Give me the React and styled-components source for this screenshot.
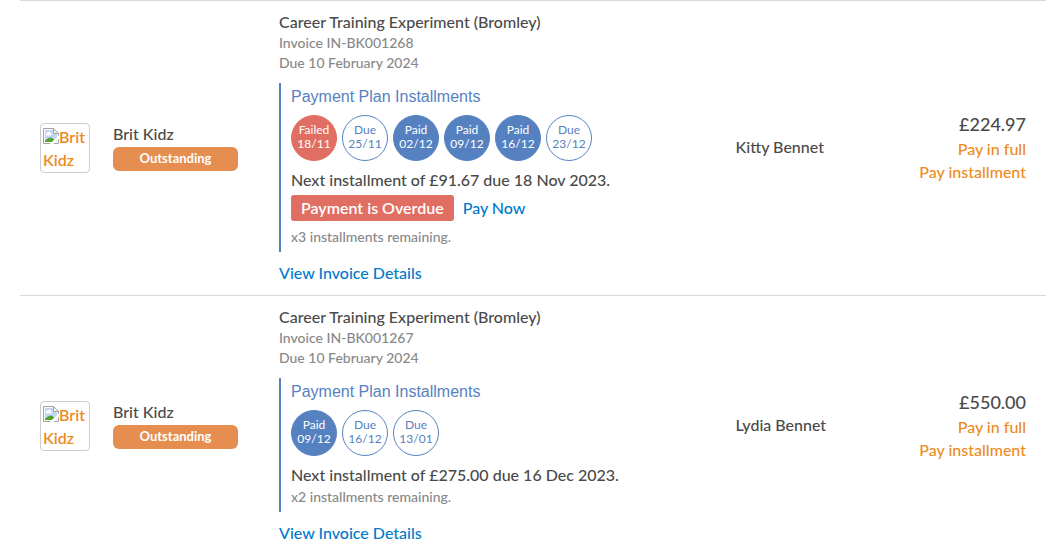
import React from 'react'
import styled, { createGlobalStyle } from 'styled-components'

const GlobalStyle = createGlobalStyle`
  * {
    box-sizing: border-box;
  }

  body {
    margin: 0;
    background: #fff;
    color: #4a4a4a;
    font-family: Lato, sans-serif;
    font-size: 16px;
    font-weight: 500;
    line-height: 23px;
  }
`

const Page = styled.main`
  padding: 0 18px 0 20px;
`

const Table = styled.table`
  width: 100%;
  table-layout: fixed;
  border-collapse: separate;
  border-spacing: 0;
`

const Col = styled.col`
  width: ${props => props.$width};
`

const Cell = styled.td`
  border-top: 1px solid #d8d8d8;
  padding: 10px 0;
  vertical-align: middle;
`

const LogoCell = styled(Cell)`
  padding-left: 20px;
`

const PersonCell = styled(Cell)`
  padding-bottom: 13px;
`

const AmountCell = styled(Cell)`
  padding-right: 20px;
  padding-bottom: 12px;
  text-align: right;
`

const Link = styled.a`
  color: #007acc;
  text-decoration: none;
`

const LogoLink = styled.a`
  display: block;
  width: 50px;
  height: 50px;
  padding: 1px 2px;
  border: 1px solid #ccc;
  border-radius: 4px;
  overflow: hidden;
  color: #ed8b1c;
  font-weight: 600;
  text-decoration: none;

  svg {
    vertical-align: -1px;
  }
`

const Status = styled.div`
  width: 125px;
  height: 24px;
  margin: 2px 0 3px;
  border-radius: 6px;
  background: #e68d50;
  color: #fff;
  font-size: 13px;
  font-weight: 700;
  line-height: 22px;
  text-align: center;
`

const Title = styled.div`
  line-height: 22px;
`

const Note = styled.div`
  color: #888;
  font-size: 14px;
  line-height: 20px;
`

const Plan = styled.section`
  margin: 10px 0 9px;
  padding: 2px 0 5px 10px;
  border-left: 2px solid #5681c1;
`

const PlanTitle = styled.h2`
  margin: 0 0 7px;
  color: #5681c1;
  font-family: 'Liberation Sans', sans-serif;
  font-size: 16px;
  font-weight: 400;
  line-height: 23px;
`

const Installments = styled.div`
  display: flex;
  gap: 5px;
  margin-bottom: 7px;
`

const fills = {
  Failed: '#e16e63',
  Paid: '#5681c1',
  Due: '#fff',
}

const Installment = styled.div`
  display: flex;
  flex-direction: column;
  justify-content: center;
  width: 46px;
  height: 46px;
  padding-bottom: 2px;
  border: 1px solid ${props => (props.$status === 'Failed' ? '#e16e63' : '#5681c1')};
  border-radius: 50%;
  background: ${props => fills[props.$status]};
  color: ${props => (props.$status === 'Due' ? '#5681c1' : '#fff')};
  font-size: 12px;
  font-weight: 400;
  line-height: 14px;
  text-align: center;
`

const NextDue = styled.div`
  padding-bottom: 1px;
`

const OverdueRow = styled.div`
  display: flex;
  align-items: center;
  gap: 9px;
  margin: 3px 0 6px;

  ${Link} {
    padding-bottom: 2px;
  }
`

const Overdue = styled.span`
  padding: 0 10px;
  border-radius: 3px;
  background: #e16e63;
  color: #fff;
  font-weight: 600;
  line-height: 26px;
`

const DetailsLink = styled(Link)`
  display: block;
  padding-bottom: 1px;
`

const Amount = styled.div`
  font-size: 18px;
  line-height: 26px;
`

const PayLink = styled.a`
  display: block;
  color: #ed8b1c;
  text-decoration: none;
`

const invoices = [
  {
    number: 'IN-BK001268',
    installments: [
      ['Failed', '18/11'],
      ['Due', '25/11'],
      ['Paid', '02/12'],
      ['Paid', '09/12'],
      ['Paid', '16/12'],
      ['Due', '23/12'],
    ],
    next: 'Next installment of £91.67 due 18 Nov 2023.',
    overdue: true,
    remaining: 3,
    person: 'Kitty Bennet',
    amount: '£224.97',
  },
  {
    number: 'IN-BK001267',
    installments: [
      ['Paid', '09/12'],
      ['Due', '16/12'],
      ['Due', '13/01'],
    ],
    next: 'Next installment of £275.00 due 16 Dec 2023.',
    overdue: false,
    remaining: 2,
    person: 'Lydia Bennet',
    amount: '£550.00',
  },
]

const PictureIcon = () => (
  <svg width="16" height="16" viewBox="0 0 16 16" aria-hidden="true">
    <path d="M0.5 0.5H10.5L15.5 5.5V15.5H0.5Z" fill="#fff" />
    <path d="M2 2H10V6H14V14H2Z" fill="#c3d5f4" />
    <path d="M3 6.5a1.5 1.5 0 0 1 1.5-2 2 2 0 0 1 3.5 1 1.2 1.2 0 0 1 0 2H3Z" fill="#fff" />
    <path d="M2 14V12.5C3.5 12 5 9.500 7.500 9.500c2 0 3 1.500 4 2.500V14Z" fill="#50a52f" />
    <path d="M0.5 15.5V0.5H10.5L15.5 5.5V15.5Z" fill="none" stroke="#a2a2a2" />
    <path d="M10.5 0.5V5.5H15.5Z" fill="#f4f4f4" stroke="#a2a2a2" />
    <path d="M6 16.5L16.500 7V10L10 16.500Z" fill="#fff" />
  </svg>
)

const InvoiceRow = ({ invoice }) => {
  const { number, installments, next, overdue, remaining, person, amount } = invoice
  return (
    <tr>
      <LogoCell>
        <LogoLink href="#"><PictureIcon />Brit Kidz</LogoLink>
      </LogoCell>
      <Cell>
        <div>Brit Kidz</div>
        <Status>Outstanding</Status>
      </Cell>
      <Cell>
        <Title>Career Training Experiment (Bromley)</Title>
        <Note>Invoice {number}</Note>
        <Note>Due 10 February 2024</Note>
        <Plan>
          <PlanTitle>Payment Plan Installments</PlanTitle>
          <Installments>
            {installments.map(([status, date]) => (
              <Installment key={date} $status={status}>
                <span>{status}</span>
                <span>{date}</span>
              </Installment>
            ))}
          </Installments>
          <NextDue>{next}</NextDue>
          {overdue && (
            <OverdueRow>
              <Overdue>Payment is Overdue</Overdue>
              <Link href="#">Pay Now</Link>
            </OverdueRow>
          )}
          <Note>x{remaining} installments remaining.</Note>
        </Plan>
        <DetailsLink href="#">View Invoice Details</DetailsLink>
      </Cell>
      <PersonCell>{person}</PersonCell>
      <AmountCell>
        <Amount>{amount}</Amount>
        <PayLink href="#">Pay in full</PayLink>
        <PayLink href="#">Pay installment</PayLink>
      </AmountCell>
    </tr>
  )
}

const App = () => (
  <>
    <GlobalStyle />
    <Page>
      <Table>
        <colgroup>
          <Col $width="93px" />
          <Col $width="166px" />
          <Col $width="44.5%" />
          <Col $width="15%" />
          <Col />
        </colgroup>
        <tbody>
          {invoices.map(invoice => (
            <InvoiceRow key={invoice.number} invoice={invoice} />
          ))}
        </tbody>
      </Table>
    </Page>
  </>
)

export default App
